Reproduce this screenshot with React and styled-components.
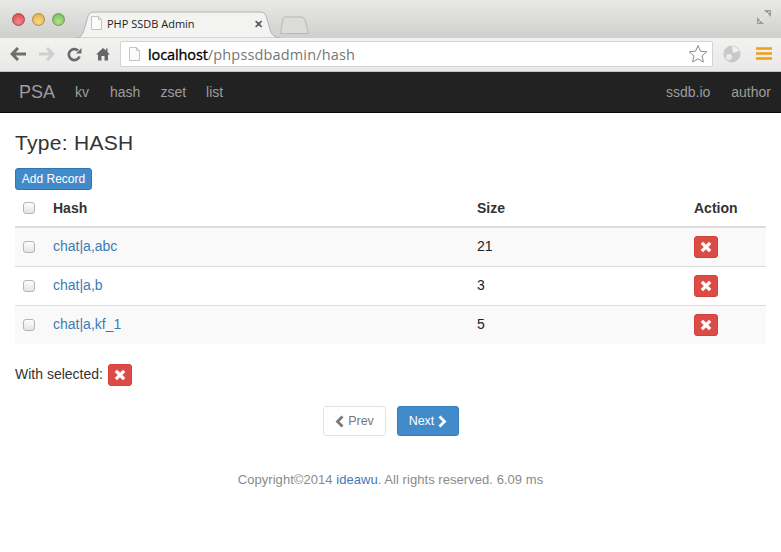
import React from 'react';
import styled, { createGlobalStyle } from 'styled-components';

const Global = createGlobalStyle`
  html, body { margin: 0; padding: 0; background: #fff; }
  body { font-family: "Liberation Sans", Arial, sans-serif; color: #333; font-size: 14px; }
  * { box-sizing: border-box; }
`;

const Page = styled.div`width: 781px; height: 552px; overflow: hidden; display: flex; flex-direction: column; background: #fff;`;

const TitleBar = styled.div`
  height: 38px; display: flex; align-items: flex-end; padding-left: 12px;
  background: linear-gradient(#e9e9e7, #cfcfcd); position: relative;
`;
const Lights = styled.div`display: flex; gap: 7px; align-self: flex-start; margin-top: 13px; width: 64px;`;
const Light = styled.span`
  width: 13px; height: 13px; border-radius: 50%; border: 1px solid ${p => p.$edge};
  background: radial-gradient(circle at 50% 70%, ${p => p.$hi}, ${p => p.$c});
`;
const Tab = styled.div`
  position: relative; width: 204px; height: 27px; display: flex; align-items: center;
  padding: 0 17px 3px 15px; font-size: 11px; color: #222; font-family: "Open Sans", "Liberation Sans", sans-serif;
`;
const TabShape = styled.svg`position: absolute; left: 0; top: 0; z-index: 0;`;
const TabIcon = styled.svg`position: relative; flex: none; margin-right: 5px;`;
const TabText = styled.span`position: relative; flex: 1;`;
const TabClose = styled.span`position: relative; font-size: 11px; color: #555; font-weight: 700;`;
const NewTab = styled.svg`margin-bottom: 4px;`;
const Resize = styled.svg`position: absolute; right: 9px; top: 9px;`;

const Toolbar = styled.div`
  height: 34px; display: flex; align-items: center; padding: 0 0 1px 10px;
  background: linear-gradient(#f2f2f1, #e9e9e8); border-bottom: 1px solid #c4c4c3;
`;
const ToolIcon = styled.svg`flex: none; margin-right: ${p => p.$mr || 0}px;`;
const Omnibox = styled.div`
  width: 593px; height: 26px; background: #fff; border: 1px solid #d3d3d3; border-radius: 2px;
  display: flex; align-items: center; padding: 0 4px 0 8px; font-size: 14.5px; margin-right: 10px;
  font-family: "Open Sans", "Liberation Sans", sans-serif; letter-spacing: .1px;
`;
const Host = styled.span`color: #000; margin-left: 8px; letter-spacing: -.1px; -webkit-text-stroke: .3px #000;`;
const UrlPath = styled.span`color: #777; flex: 1; letter-spacing: .15px;`;

const Navbar = styled.nav`
  height: 41px; background: #222; display: flex; align-items: center; padding: 0 10px 0 19px;
  border-bottom: 1px solid #080808; color: #9d9d9d; font-size: 14px;
`;
const Brand = styled.span`font-size: 18px; margin-right: 20px;`;
const NavLink = styled.span`margin-right: ${p => p.$mr}px;`;
const Spacer = styled.span`flex: 1;`;

const Content = styled.main`padding: 0 15px; flex: 1;`;
const Title = styled.h2`font-size: 21px; font-weight: 400; line-height: 24px; margin: 18px 0 13px; color: #333; letter-spacing: .3px;`;
const AddButton = styled.button`
  display: block; height: 22px; width: 77px; padding: 0; border: 1px solid #2d77b5; border-radius: 3px;
  background: #428bca; color: #fff; font: 12px "Liberation Sans", sans-serif;
`;
const Table = styled.table`width: 751px; border-collapse: collapse; table-layout: fixed; font-size: 14px;`;
const Th = styled.th`
  height: 37px; text-align: left; padding: 0; padding-left: ${p => p.$pl || 0}px; border-bottom: 2px solid #ddd; color: #333;
`;
const Td = styled.td`height: 39px; padding: 0; padding-left: ${p => p.$pl || 0}px; border-top: 1px solid #ddd; color: #222;`;
const TextTd = styled(Td)`padding-bottom: 2px;`;
const Row = styled.tr`background: ${p => p.$striped ? '#f9f9f9' : '#fff'};`;
const Check = styled.span`
  display: block; width: 12px; height: 12px; border: 1px solid #b5b5b5; border-radius: 3px;
  background: linear-gradient(#fdfdfd, #e4e4e4);
`;
const Link = styled.a`color: #3d7ab8; text-decoration: none;`;
const Del = styled.button`
  width: 24px; height: 22px; padding: 0; display: inline-flex; align-items: center; justify-content: center;
  background: #dc4b46; border: 1px solid #d43f3a; border-radius: 3px; vertical-align: middle;
`;
const WithSel = styled.div`display: flex; align-items: center; gap: 5px; margin-top: 20px; height: 22px; font-size: 14px; color: #333;`;
const SelLabel = styled.span`margin-bottom: 2px;`;
const Pager = styled.div`display: flex; justify-content: center; gap: 11px; margin-top: 20px; padding-left: 1px;`;
const PageBtn = styled.button`
  width: ${p => p.$w}px; height: 30px; padding: 0; border-radius: 3px; font: 12.5px "Liberation Sans", sans-serif;
  display: inline-flex; align-items: center; justify-content: center; gap: 4px;
  background: ${p => p.$primary ? '#428bca' : '#fff'};
  color: ${p => p.$primary ? '#fff' : '#777'};
  border: 1px solid ${p => p.$primary ? '#357ebd' : '#e4e4e4'};
`;
const Footer = styled.p`margin: 35px 0 0; text-align: center; font-size: 13px; letter-spacing: .05px; color: #8a8a8a; line-height: 18px;`;

const X = () => (
  <svg width="12" height="12" viewBox="0 0 12 12"><path d="M3 3l6 6M9 3L3 9" stroke="#fff" strokeWidth="3.2" strokeLinecap="square" /></svg>
);
const Chev = ({ dir, color }) => (
  <svg width="9" height="13" viewBox="0 0 9 13">
    <path d={dir === 'l' ? 'M7.500 1.500L2.500 6.500L7.500 11.500' : 'M1.500 1.500L6.500 6.500L1.500 11.500'} fill="none" stroke={color} strokeWidth="2.800" />
  </svg>
);
const Doc = () => (
  <svg width="11" height="14" viewBox="0 0 11 14"><path d="M.5.5h7l3 3v10H.5z" fill="#fbfbfb" stroke="#c4c4c4" /><path d="M7.5.5v3h3" fill="none" stroke="#c4c4c4" /></svg>
);

const rows = [
  { name: 'chat|a,abc', size: 21, striped: true },
  { name: 'chat|a,b', size: 3 },
  { name: 'chat|a,kf_1', size: 5, striped: true },
];

export default function App() {
  return (
    <Page>
      <Global />
      <TitleBar>
        <Lights>
          <Light $c="#d8404a" $hi="#f08a8c" $edge="#a8484c" />
          <Light $c="#e4a93a" $hi="#f6d98a" $edge="#b08a3c" />
          <Light $c="#6cb84e" $hi="#b4e08e" $edge="#6d9a54" />
        </Lights>
        <Tab>
          <TabShape width="204" height="27" viewBox="0 0 204 27">
            <path d="M0 27C6 27 7 22 9 16L12 5C13 2 15 1 18 1H184C187 1 189 2 190 5L194 18C195 23 197 26 204 27Z" fill="#f3f3f2" stroke="#b4b4b4" />
          </TabShape>
          <TabIcon width="11" height="14" viewBox="0 0 11 14"><path d="M.5.5h7l3 3v10H.5z" fill="#fbfbfb" stroke="#c4c4c4" /><path d="M7.5.5v3h3" fill="none" stroke="#c4c4c4" /></TabIcon>
          <TabText>PHP SSDB Admin</TabText>
          <TabClose>✕</TabClose>
        </Tab>
        <NewTab width="29" height="18" viewBox="0 0 29 18">
          <path d="M.5 17.500L3 3C3.500 1.500 4.500 1 6 1H21C23 1 24 2 25 4L28.500 17.500Z" fill="#dcdcda" stroke="#b8b8b6" />
        </NewTab>
        <Resize width="16" height="16" viewBox="0 0 16 16">
          <path d="M1 8v7h7zM15 8V1H8z" fill="#9b9b9b" /><path d="M2 14L7 9M9 7l5-5" stroke="#ececec" strokeWidth="1" />
        </Resize>
      </TitleBar>
      <Toolbar>
        <ToolIcon $mr={11} width="17" height="14" viewBox="0 0 17 14"><path d="M8 1L2 7l6 6M2 7h14" fill="none" stroke="#6e6e6e" strokeWidth="3" /></ToolIcon>
        <ToolIcon $mr={12} width="17" height="14" viewBox="0 0 17 14"><path d="M9 1l6 6-6 6M15 7H1" fill="none" stroke="#cfcfcf" strokeWidth="3" /></ToolIcon>
        <ToolIcon $mr={14} width="15" height="15" viewBox="0 0 15 15"><path d="M12.500 9.500A5.500 5.500 0 1 1 11 3.500" fill="none" stroke="#6a6a6a" strokeWidth="2.600" /><path d="M9 6.500h5.500V1z" fill="#6a6a6a" /></ToolIcon>
        <ToolIcon $mr={10} width="14" height="14" viewBox="0 0 14 14"><path d="M7 1L0 7.500h2V13.500h3.500V9h3v4.500H12V7.500h2L11.500 5V1.500H10V3.600z" fill="#666" /></ToolIcon>
        <Omnibox>
          <Doc />
          <Host>localhost</Host>
          <UrlPath>/phpssdbadmin/hash</UrlPath>
          <svg width="20" height="20" viewBox="0 0 20 20"><path d="M10 1.500l2.500 5.700 6.200.6-4.700 4.100 1.400 6.100L10 14.800l-5.400 3.200L6 11.900 1.300 7.800l6.200-.6z" fill="#fff" stroke="#8c8c8c" /></svg>
        </Omnibox>
        <ToolIcon $mr={15} width="18" height="18" viewBox="0 0 18 18">
          <circle cx="9" cy="9" r="8.500" fill="#c9c9c9" /><path d="M9 1a8 8 0 0 1 7 5L10 8z" fill="#f1f1f1" /><circle cx="6" cy="12" r="3" fill="#ececec" />
        </ToolIcon>
        <ToolIcon width="16" height="14" viewBox="0 0 16 14"><path d="M0 1.500h16M0 6.500h16M0 11.500h16" stroke="#ef9d17" strokeWidth="2.600" /></ToolIcon>
      </Toolbar>
      <Navbar>
        <Brand>PSA</Brand>
        <NavLink $mr={21}>kv</NavLink>
        <NavLink $mr={20}>hash</NavLink>
        <NavLink $mr={20}>zset</NavLink>
        <NavLink $mr={0}>list</NavLink>
        <Spacer />
        <NavLink $mr={21}>ssdb.io</NavLink>
        <NavLink $mr={0}>author</NavLink>
      </Navbar>
      <Content>
        <Title>Type: HASH</Title>
        <AddButton>Add Record</AddButton>
        <Table>
          <colgroup>
            <col style={{ width: 38 }} />
            <col style={{ width: 424 }} />
            <col style={{ width: 217 }} />
            <col style={{ width: 72 }} />
          </colgroup>
          <thead>
            <tr>
              <Th $pl={8}><Check /></Th>
              <Th>Hash</Th>
              <Th>Size</Th>
              <Th>Action</Th>
            </tr>
          </thead>
          <tbody>
            {rows.map(r => (
              <Row key={r.name} $striped={r.striped}>
                <Td $pl={8}><Check /></Td>
                <TextTd><Link>{r.name}</Link></TextTd>
                <TextTd>{r.size}</TextTd>
                <Td><Del><X /></Del></Td>
              </Row>
            ))}
          </tbody>
        </Table>
        <WithSel><SelLabel>With selected:</SelLabel> <Del><X /></Del></WithSel>
        <Pager>
          <PageBtn $w={63}><Chev dir="l" color="#777" />Prev</PageBtn>
          <PageBtn $w={62} $primary>Next<Chev dir="r" color="#fff" /></PageBtn>
        </Pager>
        <Footer>Copyright©2014 <Link>ideawu</Link>. All rights reserved. 6.09 ms</Footer>
      </Content>
    </Page>
  );
}
